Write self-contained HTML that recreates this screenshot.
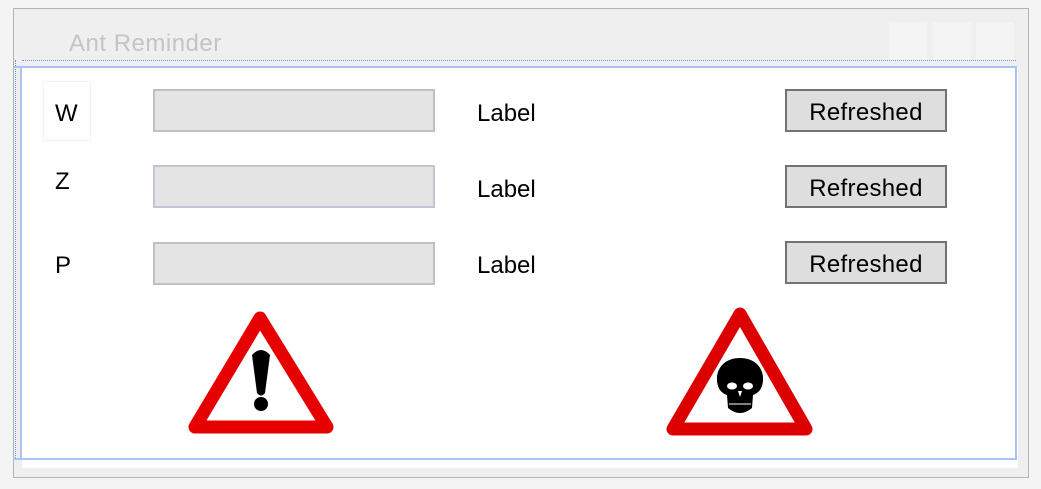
<!DOCTYPE html>
<html><head><style>
body{margin:0;width:1041px;height:489px;background:#f4f4f4;position:relative;overflow:hidden;font-family:"Liberation Sans",sans-serif;}
.a{position:absolute}
.win{left:13px;top:8px;width:1014px;height:468px;background:#efefef;border:1px solid #b4b4b4;}
.client{left:22px;top:67px;width:996px;height:401px;background:#fff;}
.tb{background:#e4e4e4;border:2px solid #c0c0c0;box-sizing:border-box;width:282px;height:43px;left:153px}
.btn{background:#dedede;border:2px solid #737373;box-sizing:border-box;width:162px;height:43px;left:785px;font-size:24px;letter-spacing:0.3px;text-align:center;line-height:43px;color:#000}
.lbl{font-size:24px;color:#000}
.cb{background:#f4f4f4;width:38px;height:38px;top:22px}
</style></head><body>
<div class="a win"></div>
<div class="a" style="left:69px;top:30px;font-size:24px;letter-spacing:0.5px;color:#c4c4c4">Ant Reminder</div>
<div class="a cb" style="left:889px"></div>
<div class="a cb" style="left:933px"></div>
<div class="a cb" style="left:976px"></div>
<div class="a" style="left:22px;top:60px;width:994px;border-top:1px dotted #6f95e6"></div>
<div class="a" style="left:15px;top:60px;height:398px;border-left:1px dotted #6f95e6"></div>
<div class="a client"></div>
<div class="a" style="left:13px;top:66px;width:1004px;height:2px;background:#a9c4f2"></div>
<div class="a" style="left:13px;top:458px;width:1004px;height:2px;background:#a9c4f2"></div>
<div class="a" style="left:20px;top:66px;width:2px;height:393px;background:#a9c4f2"></div>
<div class="a" style="left:1015px;top:66px;width:2px;height:393px;background:#a9c4f2"></div>
<div class="a" style="left:43px;top:81px;width:46px;height:58px;border:1px solid #eef3fc"></div>
<div class="a lbl" style="left:55px;top:100px">W</div>
<div class="a lbl" style="left:55px;top:168px">Z</div>
<div class="a lbl" style="left:55px;top:252px">P</div>
<div class="a tb" style="top:89px"></div>
<div class="a tb" style="top:165px;border-color:#c4c4d4"></div>
<div class="a tb" style="top:242px"></div>
<div class="a lbl" style="left:477px;top:100px">Label</div>
<div class="a lbl" style="left:477px;top:176px">Label</div>
<div class="a lbl" style="left:477px;top:252px">Label</div>
<div class="a btn" style="top:89px">Refreshed</div>
<div class="a btn" style="top:165px">Refreshed</div>
<div class="a btn" style="top:241px">Refreshed</div>
<svg class="a" style="left:0;top:0" width="1041" height="489">
<polygon points="260,318 195,427 327,427" fill="#fff" stroke="#e60000" stroke-width="13" stroke-linejoin="round"/>
<path d="M252,355 Q261,345 270,355 L265,393 Q261,398 257,393 Z" fill="#000"/>
<circle cx="261" cy="404" r="7" fill="#000"/>
<polygon points="740,314 673,429 806,429" fill="#fff" stroke="#dd0000" stroke-width="13" stroke-linejoin="round"/>
<path d="M740,358 C725,358 716,368 717,381 C718,390 722,393 727,395 L728,408 Q740,418 752,408 L753,395 C758,393 762,390 763,381 C764,368 755,358 740,358 Z" fill="#000"/>
<ellipse cx="732" cy="386" rx="5" ry="3.5" fill="#fff"/>
<ellipse cx="748" cy="386" rx="5" ry="3.5" fill="#fff"/>
<path d="M738,391 L740,397 L742,391 Z" fill="#fff"/>
<path d="M729,404 L751,404" stroke="#fff" stroke-width="1"/>
</svg>
</body></html>
